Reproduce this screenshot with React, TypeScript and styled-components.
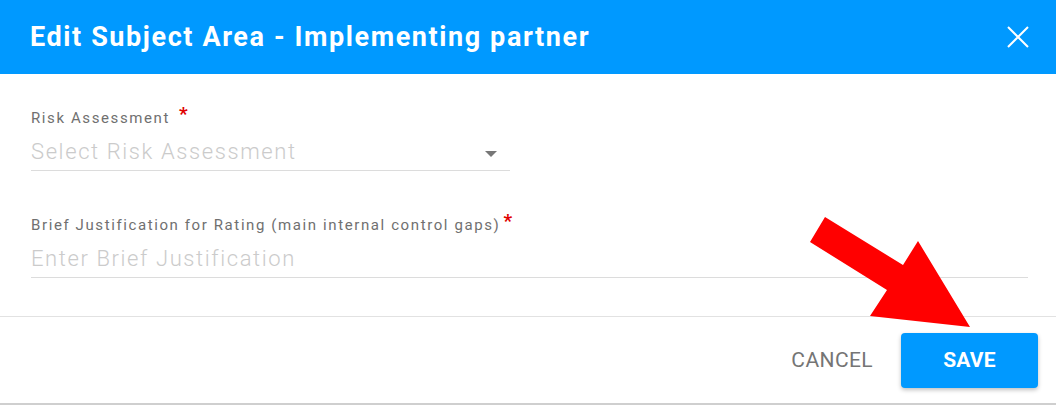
import { FC } from "react"
import styled, { createGlobalStyle } from "styled-components";

const GlobalStyle = createGlobalStyle`
  html, body {
    margin: 0;
    padding: 0;
    background: #fff;
    font-family: Roboto, "Liberation Sans", sans-serif;
  }
`

interface IFieldProps {
  label: string;
  placeholder: string;
  select?: boolean;
  wide?: boolean;
}

const Field: FC<IFieldProps> = ({ label, placeholder, select, wide }) => {
  return (
    <FieldWrap $wide={wide}>
      <Label>
        {label}
        <Star $gap={select ? 9 : 3}>*</Star>
      </Label>
      <InputRow>
        <Placeholder>{placeholder}</Placeholder>
        {select && <Caret />}
      </InputRow>
    </FieldWrap>
  )
}

// annotation arrow drawn over the dialog
const Arrow = () => (
  <ArrowSvg width="180" height="130" viewBox="800 210 180 130">
    <polygon
      fill="#ff0000"
      points="810,242 825,217 903,265 918,241 970,327 870,316 887,290"
    />
  </ArrowSvg>
)

export default function App() {
  return (
    <>
      <GlobalStyle />
      <Dialog>
        <Header>
          <Title>Edit Subject Area - Implementing partner</Title>
          <Close aria-label="close">
            <svg width="24" height="24" viewBox="0 0 24 24">
              <path d="M2 2 L22 22 M22 2 L2 22" stroke="#fff" strokeWidth="2" fill="none" />
            </svg>
          </Close>
        </Header>
        <Body>
          <Field label="Risk Assessment" placeholder="Select Risk Assessment" select />
          <Field
            label="Brief Justification for Rating (main internal control gaps)"
            placeholder="Enter Brief Justification"
            wide
          />
        </Body>
        <Footer>
          <CancelButton>CANCEL</CancelButton>
          <SaveButton>SAVE</SaveButton>
        </Footer>
        <Arrow />
      </Dialog>
    </>
  )
}

const Dialog = styled.div`
  position: relative;
  width: 1056px;
  height: 405px;
  display: flex;
  flex-direction: column;
  background: #fff;
  overflow: hidden;
`
const Header = styled.div`
  height: 74px;
  flex-shrink: 0;
  background: #0099ff;
  display: flex;
  align-items: center;
  justify-content: space-between;
  padding: 0 26px 0 30px;
`
const Title = styled.h2`
  margin: 0;
  color: #fff;
  font-size: 27px;
  line-height: 30px;
  font-weight: 700;
  letter-spacing: 1.6px;
`
const Close = styled.button`
  border: 0;
  background: none;
  padding: 0;
  display: flex;
  cursor: pointer;
`
const Body = styled.div`
  flex: 1;
  padding: 31px 28px 0 31px;
  display: flex;
  flex-direction: column;
  gap: 41px;
`
const FieldWrap = styled.div<{ $wide?: boolean }>`
  width: ${p => (p.$wide ? "997px" : "479px")};
  border-bottom: 1px solid #dcdcdc;
  padding-bottom: 5px;
  display: flex;
  flex-direction: column;
  gap: 12px;
`
const Label = styled.div`
  font-size: 15px;
  line-height: 18px;
  color: #707070;
  letter-spacing: 1.6px;
  white-space: nowrap;
`
const Star = styled.span<{ $gap: number }>`
  color: #e00000;
  font-size: 19px;
  font-weight: 700;
  letter-spacing: 0;
  margin-left: ${p => p.$gap}px;
  vertical-align: 3px;
`
const InputRow = styled.div`
  display: flex;
  align-items: center;
  justify-content: space-between;
  height: 26px;
`
const Placeholder = styled.span`
  font-size: 22px;
  line-height: 26px;
  color: #cbcbcb;
  letter-spacing: 1.6px;
  font-weight: 300;
`
const Caret = styled.span`
  width: 0;
  height: 0;
  margin: 4px 13px 0 0;
  border-left: 6px solid transparent;
  border-right: 6px solid transparent;
  border-top: 6px solid #777;
`
const Footer = styled.div`
  height: 89px;
  flex-shrink: 0;
  border-top: 1px solid #e2e2e2;
  border-bottom: 2px solid #cfcfcf;
  display: flex;
  align-items: center;
  justify-content: flex-end;
  gap: 28px;
  padding-right: 18px;
  box-sizing: border-box;
`
const CancelButton = styled.button`
  border: 0;
  background: none;
  font-family: inherit;
  font-size: 21px;
  letter-spacing: 0.4px;
  color: #757575;
  padding: 0;
`
const SaveButton = styled.button`
  width: 137px;
  height: 55px;
  border: 0;
  border-radius: 4px;
  background: #0099ff;
  color: #fff;
  font-family: inherit;
  font-size: 21px;
  font-weight: 700;
  letter-spacing: 0.2px;
  box-shadow: 0 2px 4px rgba(0, 0, 0, 0.25);
`
const ArrowSvg = styled.svg`
  position: absolute;
  left: 800px;
  top: 210px;
  pointer-events: none;
`
